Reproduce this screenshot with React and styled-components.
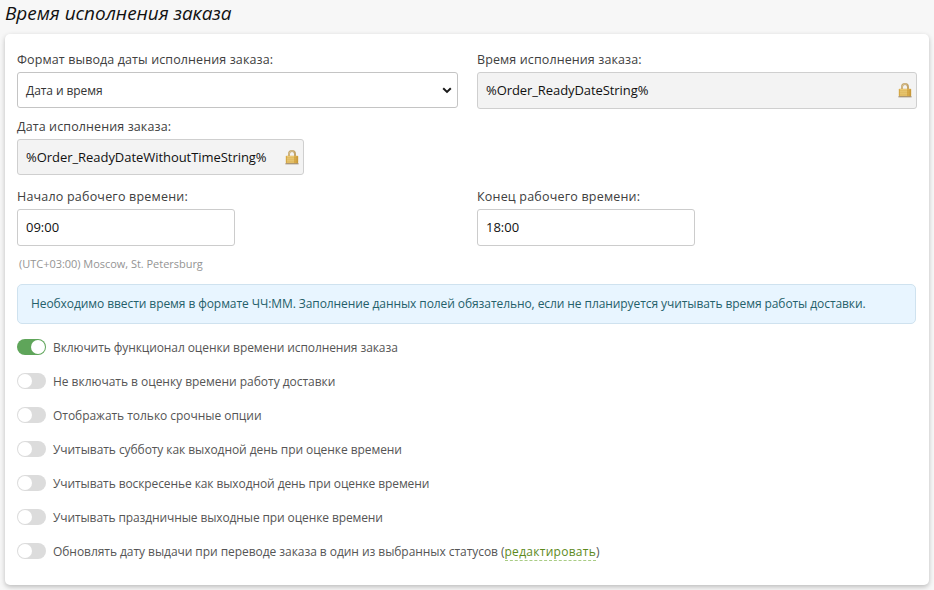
import React, { useState } from 'react';
import styled, { createGlobalStyle } from 'styled-components';

const GlobalStyle = createGlobalStyle`
  *, *::before, *::after { box-sizing: border-box; }
  body {
    margin: 0;
    background: #f7f7f7;
    font-family: "Open Sans", "Noto Sans", sans-serif;
    color: #404040;
    overflow: hidden;
  }
`;

const Page = styled.main`
  height: 590px;
  padding: 0 5px;
`;

const Title = styled.h1`
  margin: 0;
  height: 34px;
  line-height: 27px;
  font-size: 19px;
  font-style: italic;
  font-weight: 400;
  letter-spacing: -0.05px;
  color: #111;
  white-space: nowrap;
`;

const Card = styled.section`
  width: 924px;
  height: 551px;
  padding: 17px 13px 0 12px;
  background: #fff;
  border-radius: 5px;
  box-shadow: 0 2px 5px rgba(0, 0, 0, 0.24);
`;

const FieldGrid = styled.div`
  display: grid;
  grid-template-columns: 441px 440px;
  column-gap: 19px;
  height: ${(p) => p.$height}px;
`;

const Field = styled.div`
  width: ${(p) => p.$width || '100%'};
`;

const Label = styled.label`
  display: block;
  height: 21px;
  line-height: 18px;
  font-size: 12.5px;
  letter-spacing: ${(p) => p.$tracking || 0.11}px;
  white-space: nowrap;
`;

const Control = styled.div`
  display: flex;
  align-items: center;
  justify-content: space-between;
  height: ${(p) => p.$height || 36}px;
  padding: 0 ${(p) => (p.$locked ? 4 : 5)}px ${(p) => (p.$height ? 1 : 0)}px 8px;
  border: 1px solid ${(p) => (p.$locked ? '#cfcfcf' : '#c4c4c4')};
  border-radius: 3px;
  background: ${(p) => (p.$locked ? '#f3f3f3' : '#fff')};
  color: #111;
  font-size: 13px;
  letter-spacing: ${(p) => p.$tracking || 0}px;
  white-space: nowrap;
`;

const SelectText = styled.span`
  font-size: 12px;
  letter-spacing: -0.08px;
  color: #333;
`;

const TimeInput = styled.input`
  display: block;
  width: 218px;
  height: 37px;
  padding: 0 8px 2px;
  border: 1px solid #ccc;
  border-radius: 3px;
  background: #fff;
  outline: none;
  font: 13px "Open Sans", "Noto Sans", sans-serif;
  color: #111;
`;

const Hint = styled.div`
  height: 30px;
  padding: 0 2px;
  line-height: 19px;
  font-size: 11px;
  letter-spacing: -0.03px;
  color: #949494;
`;

const Notice = styled.div`
  height: 40px;
  padding: 0 13px;
  border: 1px solid #cfe2ef;
  border-radius: 5px;
  background: #e8f5ff;
  color: #24606a;
  font-size: 12px;
  line-height: 38px;
  letter-spacing: -0.08px;
  white-space: nowrap;
`;

const OptionList = styled.div`
  display: flex;
  flex-direction: column;
  padding-top: 6px;
`;

const Option = styled.div`
  display: flex;
  align-items: center;
  gap: 7px;
  height: 34px;
  font-size: 12px;
  line-height: 17px;
  letter-spacing: ${(p) => p.$tracking}px;
  color: #555;
  white-space: nowrap;
`;

const Switch = styled.button`
  display: flex;
  align-items: center;
  justify-content: ${(p) => (p.$on ? 'flex-end' : 'flex-start')};
  width: 29px;
  height: 16px;
  padding: 1px;
  border: 0;
  border-radius: 8px;
  background: ${(p) => (p.$on ? '#5fa55a' : '#dcdcdc')};
  cursor: pointer;
`;

const Knob = styled.span`
  width: 14px;
  height: 14px;
  border-radius: 50%;
  background: #fff;
`;

const EditLink = styled.a`
  color: #5d8a1c;
  border-bottom: 1px dashed #a9cc85;
  letter-spacing: 0.28px;
  cursor: pointer;
`;

function Chevron() {
  return (
    <svg width="10" height="7" viewBox="0 0 10 7" fill="none">
      <path d="M1.2 1.2 5 4.9l3.8-3.7" stroke="#1a1a1a" strokeWidth="2" />
    </svg>
  );
}

function Lock() {
  return (
    <svg width="14" height="16" viewBox="0 0 14 16">
      <path d="M4 7.5V5a3 3 0 0 1 6 0v2.5" fill="none" stroke="#c3a469" strokeWidth="2" />
      <path d="M4 7V5a3 3 0 0 1 4.5-2.6" fill="none" stroke="#e0d0a8" strokeWidth=".7" />
      <rect x=".8" y="6.8" width="12.4" height="7.6" rx=".8" fill="#dcae4d" />
      <rect x="2" y="7.2" width="7" height="6.6" fill="#efcf7c" />
      <path d="M1 8.9h12M1 10.9h12M1 12.9h12" stroke="#c79a3c" strokeWidth=".6" />
      <path d="M12.2 7.2v7" stroke="#c29438" />
      <path d="M.4 14.8h13.2" stroke="#8b7456" strokeWidth=".9" />
    </svg>
  );
}

const initialOptions = [
  { text: 'Включить функционал оценки времени исполнения заказа', tracking: -0.09, on: true },
  { text: 'Не включать в оценку времени работу доставки', tracking: -0.03 },
  { text: 'Отображать только срочные опции', tracking: -0.04 },
  { text: 'Учитывать субботу как выходной день при оценке времени', tracking: -0.07 },
  { text: 'Учитывать воскресенье как выходной день при оценке времени', tracking: -0.095 },
  { text: 'Учитывать праздничные выходные при оценке времени', tracking: -0.115 },
  {
    text: 'Обновлять дату выдачи при переводе заказа в один из выбранных статусов',
    tracking: -0.055,
    link: 'редактировать',
  },
];

export default function App() {
  const [options, setOptions] = useState(initialOptions);
  const toggle = (index) =>
    setOptions(options.map((o, i) => (i === index ? { ...o, on: !o.on } : o)));

  return (
    <>
      <GlobalStyle />
      <Page>
        <Title>Время исполнения заказа</Title>
        <Card>
          <FieldGrid $height={67}>
            <Field>
              <Label>Формат вывода даты исполнения заказа:</Label>
              <Control>
                <SelectText>Дата и время</SelectText>
                <Chevron />
              </Control>
            </Field>
            <Field>
              <Label>Время исполнения заказа:</Label>
              <Control $locked $height={37} $tracking={-0.08}>
                %Order_ReadyDateString%
                <Lock />
              </Control>
            </Field>
          </FieldGrid>
          <FieldGrid $height={70}>
            <Field $width="287px">
              <Label>Дата исполнения заказа:</Label>
              <Control $locked $tracking={-0.05}>
                %Order_ReadyDateWithoutTimeString%
                <Lock />
              </Control>
            </Field>
          </FieldGrid>
          <FieldGrid $height={66}>
            <Field>
              <Label htmlFor="start" $tracking={0.2}>Начало рабочего времени:</Label>
              <TimeInput id="start" defaultValue="09:00" />
            </Field>
            <Field>
              <Label htmlFor="end" $tracking={0.2}>Конец рабочего времени:</Label>
              <TimeInput id="end" defaultValue="18:00" />
            </Field>
          </FieldGrid>
          <Hint>(UTC+03:00) Moscow, St. Petersburg</Hint>
          <Notice>
            Необходимо ввести время в формате ЧЧ:ММ. Заполнение данных полей обязательно, если не
            планируется учитывать время работы доставки.
          </Notice>
          <OptionList>
            {options.map((o, i) => (
              <Option key={o.text} $tracking={o.tracking}>
                <Switch
                  type="button"
                  role="switch"
                  aria-checked={!!o.on}
                  aria-label={o.text}
                  $on={o.on}
                  onClick={() => toggle(i)}
                >
                  <Knob />
                </Switch>
                <span>
                  {o.text}
                  {o.link && <> (<EditLink>{o.link}</EditLink>)</>}
                </span>
              </Option>
            ))}
          </OptionList>
        </Card>
      </Page>
    </>
  );
}
